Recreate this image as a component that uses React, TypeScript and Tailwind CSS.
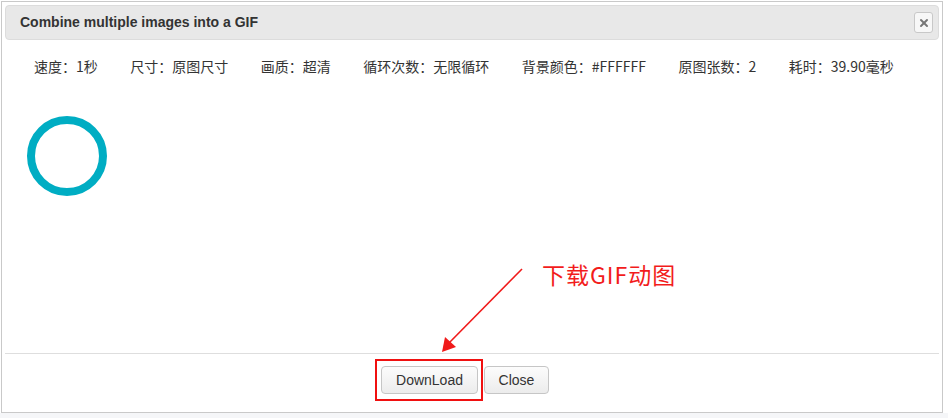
import { X } from "lucide-react";

const stats = [
  ["速度", "1秒"],
  ["尺寸", "原图尺寸"],
  ["画质", "超清"],
  ["循环次数", "无限循环"],
  ["背景颜色", "#FFFFFF"],
  ["原图张数", "2"],
  ["耗时", "39.90毫秒"],
];

const cjk = "font-['Microsoft_YaHei','Noto_Sans_CJK_SC','Noto_Sans',sans-serif]";

export default function App() {
  return (
    <div className="relative w-[948px] h-[418px] bg-white overflow-hidden font-['Liberation_Sans',Arial,sans-serif]">
      <div className="absolute left-0 right-0 bottom-0 h-[5px] bg-[#f5f6f8]" />

      {/* dialog */}
      <div className="ml-[1px] mt-[1px] w-[942px] h-[412px] flex flex-col border border-[#c9c9c9] bg-white p-[3px] pb-0">
        <div className="h-[35px] flex items-center justify-between rounded-[4px] border border-[#dcdcdc] bg-[#e8e8e8] pl-[14px] pr-[5px]">
          <span className="text-[14px] font-bold text-[#333]">
            Combine multiple images into a GIF
          </span>
          <button className="w-[19px] h-[21px] flex items-center justify-center rounded-[3px] border border-[#c8c8c8] bg-[#f7f7f7]">
            <X size={12} strokeWidth={4} className="text-[#777]" />
          </button>
        </div>

        <div className="flex-1 flex flex-col">
          <div className={`mt-[16px] pl-[29px] flex gap-[32.5px] text-[14px] leading-[20px] text-[#333] ${cjk}`}>
            {stats.map(([k, v]) => (
              <span key={k}>
                {k}：{v}
              </span>
            ))}
          </div>
          <div className="mt-[40px] ml-[22px] w-[80px] h-[80px] rounded-full border-[8px] border-[#00adc3]" />
        </div>

        <div className="h-[59px] border-t border-[#dedede] flex pt-[12px] pl-[376px] gap-[6px]">
          <button className="h-[28px] w-[97px] rounded-[4px] border border-[#c6c6c6] bg-gradient-to-b from-[#fcfcfc] to-[#ececec] text-[14px] text-[#333]">
            DownLoad
          </button>
          <button className="h-[28px] w-[65px] rounded-[4px] border border-[#c6c6c6] bg-gradient-to-b from-[#fcfcfc] to-[#ececec] text-[14px] text-[#333]">
            Close
          </button>
        </div>
      </div>

      {/* annotation */}
      <div className="absolute left-[375px] top-[359px] w-[108px] h-[42px] border-2 border-[#f01010]" />
      <div className={`absolute left-[542px] top-[259px] text-[23px] leading-[30px] tracking-[1px] text-[#f21c1c] ${cjk}`}>
        下载GIF动图
      </div>
      <svg className="absolute left-0 top-0" width="948" height="418">
        <line x1="522" y1="269" x2="448" y2="344" stroke="#f01a1a" strokeWidth="1.6" />
        <polygon points="442,352 445,337 456,347" fill="#f01a1a" />
      </svg>
    </div>
  );
}
